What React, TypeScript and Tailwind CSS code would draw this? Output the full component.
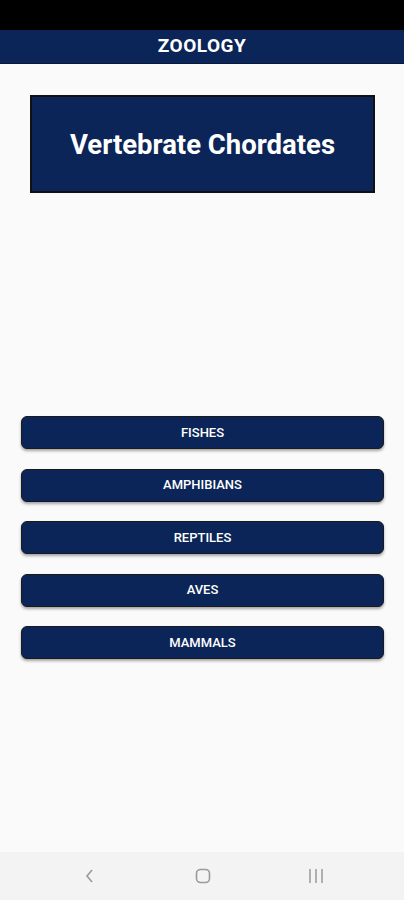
const groups = ["FISHES", "AMPHIBIANS", "REPTILES", "AVES", "MAMMALS"];

export default function App() {
  return (
    <div
      className="w-[404px] h-[900px] flex flex-col bg-[#fafafa] overflow-hidden"
      style={{ fontFamily: "Roboto, 'Noto Sans', sans-serif" }}
    >
      {/* status bar */}
      <div className="h-[30px] bg-black shrink-0" />

      {/* app bar */}
      <div className="h-[34px] bg-[#0b2558] border-b border-[#06183d] flex items-center justify-center shrink-0">
        <span className="text-white font-bold text-[19px] tracking-wide">ZOOLOGY</span>
      </div>

      <div className="flex-1 flex flex-col">
        <div className="pt-[31px] px-[30px] pr-[29px]">
          <div className="h-[98px] bg-[#0b2558] border-2 border-[#111] flex items-center justify-center pt-[2px]">
            <span className="text-white font-bold text-[27.5px]">Vertebrate Chordates</span>
          </div>
        </div>

        <div className="mt-[223px] px-[21px] pr-[20px] flex flex-col gap-[19.5px]">
          {groups.map((g) => (
            <button
              key={g}
              className="h-[33px] w-full bg-[#0b2558] rounded-[6px] border border-[#1a1a1a] shadow-[0_2px_3px_rgba(0,0,0,0.35)] text-white text-[13px] font-medium flex items-center justify-center"
            >
              {g}
            </button>
          ))}
        </div>
      </div>

      {/* system nav bar */}
      <div className="h-[48px] bg-[#f3f3f3] shrink-0 flex items-center justify-between pl-[80px] pr-[78px]">
        <svg width="20" height="20" viewBox="0 0 20 20" className="text-[#9a9a9a]">
          <path d="M12 4 L7 10 L12 16" fill="none" stroke="currentColor" strokeWidth="1.6" />
        </svg>
        <svg width="20" height="20" viewBox="0 0 20 20" className="text-[#9a9a9a]">
          <rect x="3.5" y="3.5" width="13" height="13" rx="4" fill="none" stroke="currentColor" strokeWidth="1.6" />
        </svg>
        <svg width="20" height="20" viewBox="0 0 20 20" className="text-[#9a9a9a]">
          <path d="M4 3 V17 M10 3 V17 M16 3 V17" fill="none" stroke="currentColor" strokeWidth="1.5" />
        </svg>
      </div>
    </div>
  );
}
